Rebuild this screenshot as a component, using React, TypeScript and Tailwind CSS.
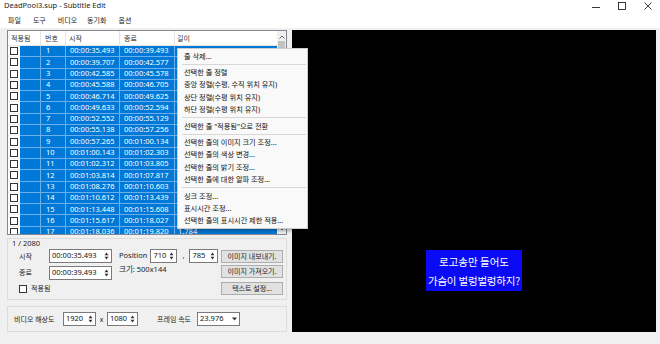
import React from 'react';

const F = { fontFamily: '"Noto Sans", "Noto Sans CJK KR", sans-serif' };

const rows: [string, string, string, string][] = [
  ['1', '00:00:35.493', '00:00:39.493', '4.000'],
  ['2', '00:00:39.707', '00:00:42.577', '2.870'],
  ['3', '00:00:42.585', '00:00:45.578', '2.993'],
  ['4', '00:00:45.588', '00:00:46.705', '1.117'],
  ['5', '00:00:46.714', '00:00:49.625', '2.911'],
  ['6', '00:00:49.633', '00:00:52.594', '2.961'],
  ['7', '00:00:52.552', '00:00:55.129', '2.577'],
  ['8', '00:00:55.138', '00:00:57.256', '2.118'],
  ['9', '00:00:57.265', '00:01:00.134', '2.869'],
  ['10', '00:01:00.143', '00:01:02.303', '2.160'],
  ['11', '00:01:02.312', '00:01:03.805', '1.493'],
  ['12', '00:01:03.814', '00:01:07.817', '4.003'],
  ['13', '00:01:08.276', '00:01:10.603', '2.327'],
  ['14', '00:01:10.612', '00:01:13.439', '2.827'],
  ['15', '00:01:13.448', '00:01:15.608', '2.160'],
  ['16', '00:01:15.617', '00:01:18.027', '2.410'],
  ['17', '00:01:18.036', '00:01:19.820', '1.784'],
];

const menu: (string | null)[] = [
  '줄 삭제...',
  null,
  '선택한 줄 정렬',
  '중앙 정렬(수평, 수직 위치 유지)',
  '상단 정렬(수평 위치 유지)',
  '하단 정렬(수평 위치 유지)',
  null,
  '선택한 줄 "적용됨"으로 전환',
  null,
  '선택한 줄의 이미지 크기 조정...',
  '선택한 줄의 색상 변경...',
  '선택한 줄의 밝기 조정...',
  '선택한 줄에 대한 알파 조정...',
  null,
  '싱크 조정...',
  '표시시간 조정...',
  '선택한 줄의 표시시간 제한 적용...',
];

function Spin() {
  return (
    <svg width="5" height="8" viewBox="0 0 5 8" className="shrink-0">
      <path d="M2.5 0.5 L4.5 3.2 L0.5 3.2 Z" fill="#333" />
      <path d="M2.5 7.5 L4.5 4.8 L0.5 4.8 Z" fill="#333" />
    </svg>
  );
}

function Input({ w, text, h = 'h-[14px]' }: { w: string; text: string; h?: string }) {
  return (
    <div className={`${w} ${h} bg-white border border-[#7a7a7a] flex items-center pl-[2px] pr-[2px] shrink-0`}>
      <span className="flex-1 text-[7.5px] leading-none text-[#111]">{text}</span>
      <Spin />
    </div>
  );
}

function Btn({ text, h = 'h-[13px]' }: { text: string; h?: string }) {
  return (
    <div className={`w-[62px] ${h} bg-[#e1e1e1] border border-[#adadad] flex items-center justify-center text-[7px] leading-none text-[#222] shrink-0`}>
      {text}
    </div>
  );
}

function Check() {
  return <div className="w-[8px] h-[8px] border border-[#333] bg-white shrink-0" />;
}

export default function App() {
  return (
    <div className="w-[660px] h-[344px] overflow-hidden bg-[#f0f0f0] relative text-[#000]" style={F}>
      {/* title bar */}
      <div className="h-[12px] bg-white flex items-center">
        <span className="pl-[4px] text-[7.5px] leading-none text-[#222]">DeadPool3.sup - Subtitle Edit</span>
        <div className="ml-auto flex items-center h-full">
          <svg width="8" height="8" viewBox="0 0 8 8" className="mr-[18px]">
            <line x1="0" y1="5.5" x2="8" y2="5.5" stroke="#222" strokeWidth="0.9" />
          </svg>
          <svg width="8" height="8" viewBox="0 0 8 8" className="mr-[18px]">
            <rect x="0.5" y="0.5" width="7" height="7" fill="none" stroke="#222" strokeWidth="0.9" />
          </svg>
          <svg width="8" height="8" viewBox="0 0 8 8" className="mr-[8px]">
            <line x1="0.5" y1="0.5" x2="7.5" y2="7.5" stroke="#222" strokeWidth="0.9" />
            <line x1="7.5" y1="0.5" x2="0.5" y2="7.5" stroke="#222" strokeWidth="0.9" />
          </svg>
        </div>
      </div>
      {/* menu bar */}
      <div className="h-[16px] bg-white flex items-center text-[7px] leading-none text-[#222]">
        <span className="ml-[8px]">파일</span>
        <span className="ml-[12px]">도구</span>
        <span className="ml-[12px]">비디오</span>
        <span className="ml-[10px]">동기화</span>
        <span className="ml-[12px]">옵션</span>
      </div>

      <div className="flex pt-[2px]">
        {/* left column */}
        <div className="ml-[7px] w-[280px] flex flex-col">
          {/* list */}
          <div className="h-[205px] border border-[#828790] bg-white flex overflow-hidden">
            <div className="w-[269px] flex flex-col overflow-hidden">
              <div className="h-[15px] flex shrink-0 text-[7px] leading-none text-[#333] border-b border-[#e5e5e5]">
                <div className="w-[33px] flex items-center pl-[3px] border-r border-[#e5e5e5]">적용됨</div>
                <div className="w-[25px] flex items-center pl-[4px] border-r border-[#e5e5e5]">번호</div>
                <div className="w-[54px] flex items-center pl-[3px] border-r border-[#e5e5e5]">시작</div>
                <div className="w-[55px] flex items-center pl-[4px] border-r border-[#e5e5e5]">종료</div>
                <div className="flex-1 flex items-center pl-[2px]">길이</div>
              </div>
              {rows.map((r) => (
                <div key={r[0]} className="h-[11.3px] shrink-0 flex text-[7.5px] leading-none text-white">
                  <div className="w-[12px] flex items-center pl-[2px] bg-white border-b border-[#eef0f2]">
                    <Check />
                  </div>
                  <div className="w-[21px] bg-[#0078d7] border-r border-b border-[#6aaeea]" />
                  <div className="w-[25px] bg-[#0078d7] flex items-center pl-[5px] border-r border-b border-[#6aaeea]">{r[0]}</div>
                  <div className="w-[54px] bg-[#0078d7] flex items-center pl-[4px] border-r border-b border-[#6aaeea]">{r[1]}</div>
                  <div className="w-[55px] bg-[#0078d7] flex items-center pl-[4px] border-r border-b border-[#6aaeea]">{r[2]}</div>
                  <div className="flex-1 bg-[#0078d7] flex items-center pl-[3px] border-b border-[#6aaeea]">{r[3]}</div>
                </div>
              ))}
            </div>
            {/* scrollbar */}
            <div className="w-[9px] bg-[#f0f0f0] flex flex-col items-center">
              <svg width="6" height="4" viewBox="0 0 6 4" className="mt-[4px]">
                <path d="M0.5 3.5 L3 1 L5.5 3.5" fill="none" stroke="#555" strokeWidth="0.9" />
              </svg>
              <div className="w-[7px] h-[12px] bg-[#c2c2c2] mt-[2px]" />
              <svg width="6" height="4" viewBox="0 0 6 4" className="mt-auto mb-[3px]">
                <path d="M0.5 0.5 L3 3 L5.5 0.5" fill="none" stroke="#555" strokeWidth="0.9" />
              </svg>
            </div>
          </div>

          {/* details panel */}
          <div className="mt-[3px] h-[62px] border border-[#dcdcdc] flex flex-col pr-[3px]">
            <div className="pl-[4px] text-[7.5px] leading-[9px] text-[#222]">1 / 2080</div>
            <div className="mt-[1px] h-[14px] flex items-center">
              <span className="w-[41px] pl-[11px] text-[7px] text-[#222] leading-none shrink-0">시작</span>
              <Input w="w-[63px]" text="00:00:35.493" />
              <span className="ml-[7px] text-[7.5px] leading-none text-[#222]">Position</span>
              <div className="ml-[3px]"><Input w="w-[27px]" text="710" /></div>
              <span className="w-[12px] text-center text-[7.5px] leading-none text-[#222]">,</span>
              <Input w="w-[29px]" text="785" />
              <div className="ml-auto"><Btn text="이미지 내보내기." /></div>
            </div>
            <div className="mt-[2px] h-[15px] flex items-start">
              <span className="w-[41px] pl-[11px] mt-[4px] text-[7px] text-[#222] leading-none shrink-0">종료</span>
              <div className="mt-[1px]"><Input w="w-[63px]" text="00:00:39.493" /></div>
              <span className="ml-[7px] mt-[1px] text-[7.5px] leading-none text-[#222]">크기: 500x144</span>
              <div className="ml-auto"><Btn text="이미지 가져오기." /></div>
            </div>
            <div className="mt-[2px] h-[13px] flex items-center">
              <div className="ml-[11px]"><Check /></div>
              <span className="ml-[4px] text-[7px] leading-none text-[#222]">적용됨</span>
              <div className="ml-auto"><Btn text="텍스트 설정..." /></div>
            </div>
          </div>

          {/* resolution panel */}
          <div className="mt-[6px] h-[26px] border border-[#dcdcdc] flex items-center">
            <span className="ml-[6px] w-[49px] text-[7px] leading-none text-[#222] shrink-0">비디오 해상도</span>
            <Input w="w-[33px]" text="1920" />
            <span className="w-[11px] text-center text-[7px] leading-none text-[#222]">x</span>
            <Input w="w-[31px]" text="1080" />
            <span className="ml-[19px] w-[40px] text-[7px] leading-none text-[#222] shrink-0">프레임 속도</span>
            <div className="w-[43px] h-[14px] bg-white border border-[#7a7a7a] flex items-center pl-[2px] pr-[2px]">
              <span className="flex-1 text-[7.5px] leading-none text-[#111]">23.976</span>
              <svg width="5" height="4" viewBox="0 0 5 4">
                <path d="M0 0.5 L5 0.5 L2.5 3.5 Z" fill="#333" />
              </svg>
            </div>
          </div>
        </div>

        {/* video panel */}
        <div className="ml-[5px] w-[364px] h-[302px] bg-black flex items-start justify-center">
          <div className="mt-[220px] w-[96px] h-[41px] bg-[#0a0af5] flex flex-col items-center justify-center text-white text-[10.5px] leading-[19px]" style={{ fontFamily: '"Noto Sans CJK KR", sans-serif' }}>
            <span>로고송만 들어도</span>
            <span className="tracking-[-0.2px]">가슴이 벌렁벌렁하지?</span>
          </div>
        </div>
      </div>

      {/* context menu */}
      <div className="absolute left-[177px] top-[48px] w-[131px] bg-[#f9f9f9] border border-[#cccccc] shadow-[2px_2px_3px_rgba(0,0,0,0.3)] pt-[1px] pb-[1px] text-[7.2px] leading-none text-[#111]">
        {menu.map((m, i) =>
          m === null ? (
            <div key={i} className="h-[4px] flex items-center pl-[4px] pr-[1px]">
              <div className="h-[1px] w-full bg-[#d7d7d7]" />
            </div>
          ) : (
            <div key={i} className="h-[12.4px] flex items-center pl-[6px]">{m}</div>
          )
        )}
      </div>
    </div>
  );
}
